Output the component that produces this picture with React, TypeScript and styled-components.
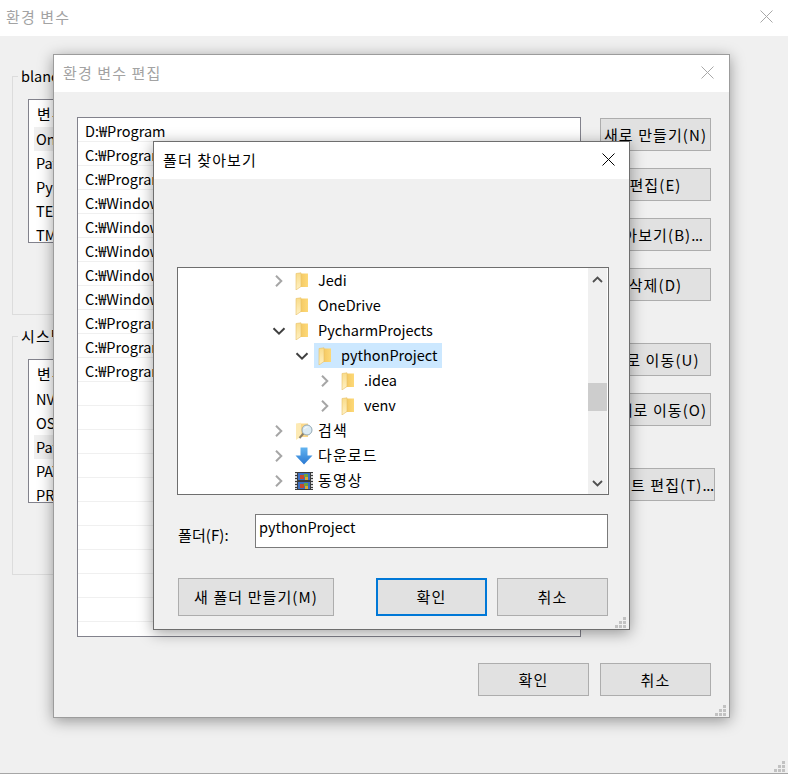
import React from "react";
import styled, { createGlobalStyle, css } from "styled-components";

const Global = createGlobalStyle`
  html, body { margin: 0; padding: 0; background: #f0f0f0; }
  body { font-family: "Noto Sans CJK KR", "Noto Sans", sans-serif; font-size: 14.5px; color: #000; }
  * { box-sizing: border-box; }
`;

const hangul = css`
  font-size: 15px;
  letter-spacing: 1.1px;
`;

const Desktop = styled.div`
  position: relative;
  width: 788px;
  height: 774px;
  overflow: hidden;
`;

const Window = styled.section<{ $x: number; $y: number; $w: number; $h: number; $edge: string; $shadow?: boolean }>`
  position: absolute;
  left: ${(p) => p.$x}px;
  top: ${(p) => p.$y}px;
  width: ${(p) => p.$w}px;
  height: ${(p) => p.$h}px;
  background: #f0f0f0;
  border: 1px solid ${(p) => p.$edge};
  box-shadow: ${(p) => (p.$shadow ? "0 3px 14px rgba(0,0,0,.38)" : "none")};
  display: flex;
  flex-direction: column;
`;

const TitleBar = styled.header<{ $h: number; $pad: number; $left?: number; $lift?: number; $active?: boolean }>`
  ${hangul}
  flex: none;
  height: ${(p) => p.$h}px;
  background: #fff;
  display: flex;
  align-items: center;
  justify-content: space-between;
  padding: 0 ${(p) => p.$pad}px ${(p) => p.$lift ?? 2}px ${(p) => p.$left ?? 9}px;
  line-height: 20px;
  color: ${(p) => (p.$active ? "#000" : "#a3a3a3")};
`;

const CloseIcon = ({ color }: { color: string }) => (
  <svg width="13" height="13" viewBox="0 0 13 13" aria-hidden="true">
    <path d="M.5.5 12.5 12.5M12.5.5.5 12.5" stroke={color} strokeWidth="1" fill="none" />
  </svg>
);

const Grip = styled.svg`
  position: absolute;
  right: 3px;
  bottom: 1px;
  width: 11px;
  height: 11px;
  fill: #c2c2c2;
`;

const GripIcon = () => (
  <Grip viewBox="0 0 11 11" aria-hidden="true">
    <rect x="8" y="0" width="3" height="3" />
    <rect x="4" y="4" width="3" height="3" />
    <rect x="8" y="4" width="3" height="3" />
    <rect x="0" y="8" width="3" height="3" />
    <rect x="4" y="8" width="3" height="3" />
    <rect x="8" y="8" width="3" height="3" />
  </Grip>
);

/* outer window */
const OuterBody = styled.div`
  padding: 30px 0 0 12px;
  display: flex;
  flex-direction: column;
  gap: 11px;
`;

const Group = styled.fieldset`
  margin: 0;
  width: 680px;
  height: 249px;
  padding: 0;
  border: 1px solid #dcdcdc;
  min-inline-size: 0;
`;

const GroupLabel = styled.legend`
  ${hangul}
  margin-left: 5px;
  padding: 0 3px;
  line-height: 20px;
`;

const UserName = styled.span`
  font-size: 14.5px;
  letter-spacing: 0;
`;

const VarList = styled.div`
  margin: 13px 0 0 15px;
  width: 640px;
  height: 144px;
  background: #fff;
  border: 1px solid #82828c;
  overflow: hidden;
  padding-left: 5px;
`;

const VarHeader = styled.div`
  ${hangul}
  height: 27px;
  line-height: 27px;
  padding-left: 3px;
`;

const VarRow = styled.div<{ $selected?: boolean }>`
  height: 24px;
  line-height: 23px;
  padding-left: 2px;
  background: ${(p) => (p.$selected ? "#f0f0f0" : "#fff")};
`;

/* middle window */
const EditBody = styled.div`
  flex: 1;
  padding: 25px 18px 20px 23px;
  display: flex;
  flex-direction: column;
`;

const EditMain = styled.div`
  display: flex;
  gap: 19px;
`;

const PathList = styled.div`
  width: 504px;
  height: 520px;
  background: #fff;
  border: 1px solid #82828c;
  overflow: hidden;
  flex: none;
`;

const PathRow = styled.div`
  height: 24px;
  line-height: 25px;
  padding-left: 7px;
  border-bottom: 1px solid #f0f0f0;
`;

const ActionColumn = styled.div`
  width: 111px;
  padding-top: 1px;
  display: flex;
  flex-direction: column;
`;

const Button = styled.button<{ $w?: number; $h?: number; $top?: number; $left?: number; $default?: boolean }>`
  flex: none;
  width: ${(p) => p.$w ?? 111}px;
  height: ${(p) => p.$h ?? 33}px;
  margin: ${(p) => p.$top ?? 0}px 0 0 ${(p) => p.$left ?? 0}px;
  padding: 0;
  background: #e1e1e1;
  border: ${(p) => (p.$default ? "2px solid #0078d7" : "1px solid #adadad")};
  border-radius: 0;
  color: #000;
  font-family: inherit;
  ${hangul}
  line-height: 20px;
  white-space: nowrap;
`;

const Dots = styled.span`
  letter-spacing: -0.4px;
`;

const Footer = styled.div<{ $top: number }>`
  margin-top: ${(p) => p.$top}px;
  display: flex;
  justify-content: flex-end;
  gap: 11px;
`;

/* browse window */
const BrowseBody = styled.div`
  padding: 88px 21px 0 23px;
  display: flex;
  flex-direction: column;
`;

const TreeBox = styled.div`
  width: 432px;
  height: 228px;
  background: #fff;
  border: 1px solid #6e6e6e;
  display: flex;
`;

const Tree = styled.div`
  flex: 1;
  min-width: 0;
`;

const TreeRow = styled.div<{ $level: number }>`
  height: 25px;
  display: flex;
  align-items: center;
  padding-left: ${(p) => 93 + p.$level * 23}px;
`;

const Twist = styled.svg<{ $open?: boolean }>`
  flex: none;
  width: 16px;
  height: 16px;
  fill: none;
  stroke: ${(p) => (p.$open ? "#404040" : "#a6a6a6")};
  stroke-width: 2;
`;

const TreeItem = styled.div<{ $selected?: boolean }>`
  margin-left: 4px;
  height: 25px;
  display: flex;
  align-items: center;
  gap: 5px;
  padding: 0 4px;
  line-height: 25px;
  background: ${(p) => (p.$selected ? "#cce8ff" : "transparent")};
`;

const TreeLabel = styled.span<{ $hangul?: boolean }>`
  margin-top: -2px;
  ${(p) => p.$hangul && hangul}
`;

const Scrollbar = styled.div`
  flex: none;
  width: 19px;
  margin-right: 1px;
  background: #f0f0f0;
  display: flex;
  flex-direction: column;
  align-items: center;
`;

const ScrollArrow = styled.svg`
  flex: none;
  width: 19px;
  height: 17px;
  margin: 3px 0 1px;
  fill: none;
  stroke: #505050;
  stroke-width: 1.8;
`;

const ScrollThumb = styled.div`
  flex: none;
  width: 19px;
  height: 28px;
  margin: 94px 0 auto;
  background: #cdcdcd;
`;

const FolderLine = styled.div`
  margin-top: 19px;
  display: flex;
  align-items: center;
  padding-left: 1px;
`;

const FolderLabel = styled.label`
  ${hangul}
  letter-spacing: .1px;
  width: 77px;
  line-height: 20px;
  margin-top: 8px;
`;

const FolderInput = styled.div`
  width: 353px;
  height: 34px;
  background: #fff;
  border: 1px solid #7a7a7a;
  padding: 2px 0 0 3px;
  line-height: 20px;
`;

const BrowseFooter = styled.div`
  margin-top: 30px;
  padding-left: 1px;
  display: flex;
  gap: 10px;
`;

const FolderIcon = () => (
  <svg width="18" height="18" viewBox="0 0 18 18" aria-hidden="true">
    <defs>
      <linearGradient id="fb" x1="0" x2="1" y1="0" y2="0">
        <stop offset="0" stopColor="#f4c862" />
        <stop offset="1" stopColor="#fdd978" />
      </linearGradient>
      <linearGradient id="ff" x1="0" x2="0" y1="0" y2="1">
        <stop offset="0" stopColor="#f9dc8a" />
        <stop offset="1" stopColor="#fff1c4" />
      </linearGradient>
    </defs>
    <path d="M5 1.5h8V15H5z" fill="url(#fb)" />
    <path d="M1 1.5 6 .8V14.5L1 18z" fill="url(#ff)" />
    <path d="M1 1.5 6 .8V14.5L1 18z" fill="none" stroke="#e8c066" strokeWidth=".6" />
  </svg>
);

const SearchIcon = () => (
  <svg width="18" height="18" viewBox="0 0 18 18" aria-hidden="true">
    <path d="M5 1.5h8V15H5z" fill="#fbd88a" />
    <path d="M1 1.5 6 .8V14.5L1 18z" fill="#fdeab4" />
    <path d="M8.5 11.5 4.5 16" stroke="#8c8068" strokeWidth="2" />
    <circle cx="12" cy="8" r="5" fill="#dcebf3" stroke="#93a9b5" strokeWidth="1" />
    <path d="M9.5 7c.5-1.2 1.6-2 3-2" stroke="#fff" strokeWidth="1" fill="none" />
  </svg>
);

const DownloadIcon = () => (
  <svg width="18" height="18" viewBox="0 0 18 18" aria-hidden="true">
    <defs>
      <linearGradient id="dl" x1="0" x2="0" y1="0" y2="1">
        <stop offset="0" stopColor="#62b4f0" />
        <stop offset="1" stopColor="#2a78d2" />
      </linearGradient>
    </defs>
    <path d="M5.5 .5h7V8.5h5L9 17.5.5 8.5h5z" fill="url(#dl)" />
  </svg>
);

const FilmIcon = () => (
  <svg width="18" height="18" viewBox="0 0 18 18" aria-hidden="true">
    <rect x="0" y="0" width="18" height="18" fill="#3c3c3c" />
    <path d="M1 1v16M17 1v16" stroke="#d8d8d8" strokeWidth="2" strokeDasharray="2 1" />
    <rect x="3" y="1" width="12" height="7" fill="#3a6fc4" />
    <rect x="3" y="10" width="12" height="7" fill="#3a6fc4" />
    <rect x="5" y="3" width="4" height="4" fill="#c7492f" />
    <rect x="9" y="2" width="4" height="3" fill="#6ea33e" />
    <rect x="10" y="5" width="3" height="3" fill="#e2a92f" />
    <rect x="5" y="12" width="4" height="4" fill="#c7492f" />
    <rect x="9" y="11" width="4" height="3" fill="#6ea33e" />
    <rect x="10" y="14" width="3" height="3" fill="#e2a92f" />
  </svg>
);

const paths = [
  "D:₩Program",
  "C:₩Program Files₩Git₩cmd",
  "C:₩Program Files₩nodejs₩",
  "C:₩Windows₩system32",
  "C:₩Windows",
  "C:₩Windows₩System32₩Wbem",
  "C:₩Windows₩System32₩WindowsPowerShell₩v1.0₩",
  "C:₩Windows₩System32₩OpenSSH₩",
  "C:₩Program Files (x86)₩NVIDIA Corporation₩PhysX₩Common",
  "C:₩Program Files₩NVIDIA Corporation₩NVIDIA NvDLISR",
  "C:₩Program Files₩dotnet₩",
  ...Array<string>(11).fill(""),
];

type Node = { level: number; label: string; twist?: "open" | "closed"; icon?: React.ReactNode; selected?: boolean; hangul?: boolean };

const nodes: Node[] = [
  { level: 0, label: "Jedi", twist: "closed" },
  { level: 0, label: "OneDrive" },
  { level: 0, label: "PycharmProjects", twist: "open" },
  { level: 1, label: "pythonProject", twist: "open", selected: true },
  { level: 2, label: ".idea", twist: "closed" },
  { level: 2, label: "venv", twist: "closed" },
  { level: 0, label: "검색", twist: "closed", icon: <SearchIcon />, hangul: true },
  { level: 0, label: "다운로드", twist: "closed", icon: <DownloadIcon />, hangul: true },
  { level: 0, label: "동영상", twist: "closed", icon: <FilmIcon />, hangul: true },
];

const userVars = ["OneDrive", "Path", "PyCharm", "TEMP", "TMP"];
const sysVars = ["NVM_HOME", "OS", "Path", "PATHEXT", "PROCESSOR_ARCHITECTURE"];

export default function App() {
  return (
    <Desktop>
      <Global />

      <Window $x={-1} $y={-1} $w={790} $h={775} $edge="#a6a6a6">
        <TitleBar $h={36} $pad={15} $left={6} $lift={3}>
          <span>환경 변수</span>
          <CloseIcon color="#a8a8a8" />
        </TitleBar>
        <OuterBody>
          <Group>
            <GroupLabel><UserName>blanc</UserName>의 사용자 변수(U)</GroupLabel>
            <VarList>
              <VarHeader>변수</VarHeader>
              {userVars.map((v, i) => (
                <VarRow key={v} $selected={i === 0}>{v}</VarRow>
              ))}
            </VarList>
          </Group>
          <Group>
            <GroupLabel>시스템 변수(S)</GroupLabel>
            <VarList>
              <VarHeader>변수</VarHeader>
              {sysVars.map((v, i) => (
                <VarRow key={v} $selected={i === 2}>{v}</VarRow>
              ))}
            </VarList>
          </Group>
        </OuterBody>
        <GripIcon />
      </Window>

      <Window $x={53} $y={54} $w={677} $h={664} $edge="#9c9c9c" $shadow>
        <TitleBar $h={37} $pad={15}>
          <span>환경 변수 편집</span>
          <CloseIcon color="#a8a8a8" />
        </TitleBar>
        <EditBody>
          <EditMain>
            <PathList>
              {paths.map((p, i) => (
                <PathRow key={i}>{p}</PathRow>
              ))}
            </PathList>
            <ActionColumn>
              <Button>새로 만들기(N)</Button>
              <Button $top={17}>편집(E)</Button>
              <Button $top={17}>찾아보기(B)<Dots>...</Dots></Button>
              <Button $top={17}>삭제(D)</Button>
              <Button $top={42}>위로 이동(U)</Button>
              <Button $top={17}>아래로 이동(O)</Button>
              <Button $top={42} $w={115}>텍스트 편집(T)<Dots>...</Dots></Button>
            </ActionColumn>
          </EditMain>
          <Footer $top={26}>
            <Button>확인</Button>
            <Button>취소</Button>
          </Footer>
        </EditBody>
        <GripIcon />
      </Window>

      <Window $x={153} $y={141} $w={477} $h={489} $edge="#6e6e6e" $shadow>
        <TitleBar $h={37} $pad={14} $active>
          <span>폴더 찾아보기</span>
          <CloseIcon color="#000" />
        </TitleBar>
        <BrowseBody>
          <TreeBox>
            <Tree>
              {nodes.map((n) => (
                <TreeRow key={n.label} $level={n.level}>
                  <Twist viewBox="0 0 16 16" $open={n.twist === "open"} aria-hidden="true">
                    {n.twist === "closed" && <path d="M5 2.7 10.3 8 5 13.3" />}
                    {n.twist === "open" && <path d="M2.5 5.2 8 10.7 13.5 5.2" />}
                  </Twist>
                  <TreeItem $selected={n.selected}>
                    {n.icon ?? <FolderIcon />}
                    <TreeLabel $hangul={n.hangul}>{n.label}</TreeLabel>
                  </TreeItem>
                </TreeRow>
              ))}
            </Tree>
            <Scrollbar>
              <ScrollArrow viewBox="0 0 19 17" aria-hidden="true">
                <path d="M5 11 9.5 6.5 14 11" />
              </ScrollArrow>
              <ScrollThumb />
              <ScrollArrow viewBox="0 0 19 17" aria-hidden="true">
                <path d="M5 5 9.5 9.5 14 5" />
              </ScrollArrow>
            </Scrollbar>
          </TreeBox>
          <FolderLine>
            <FolderLabel>폴더(F):</FolderLabel>
            <FolderInput>pythonProject</FolderInput>
          </FolderLine>
          <BrowseFooter>
            <Button $w={156} $h={38}>새 폴더 만들기(M)</Button>
            <Button $w={111} $h={38} $left={32} $default>확인</Button>
            <Button $w={111} $h={38}>취소</Button>
          </BrowseFooter>
        </BrowseBody>
        <GripIcon />
      </Window>
    </Desktop>
  );
}
